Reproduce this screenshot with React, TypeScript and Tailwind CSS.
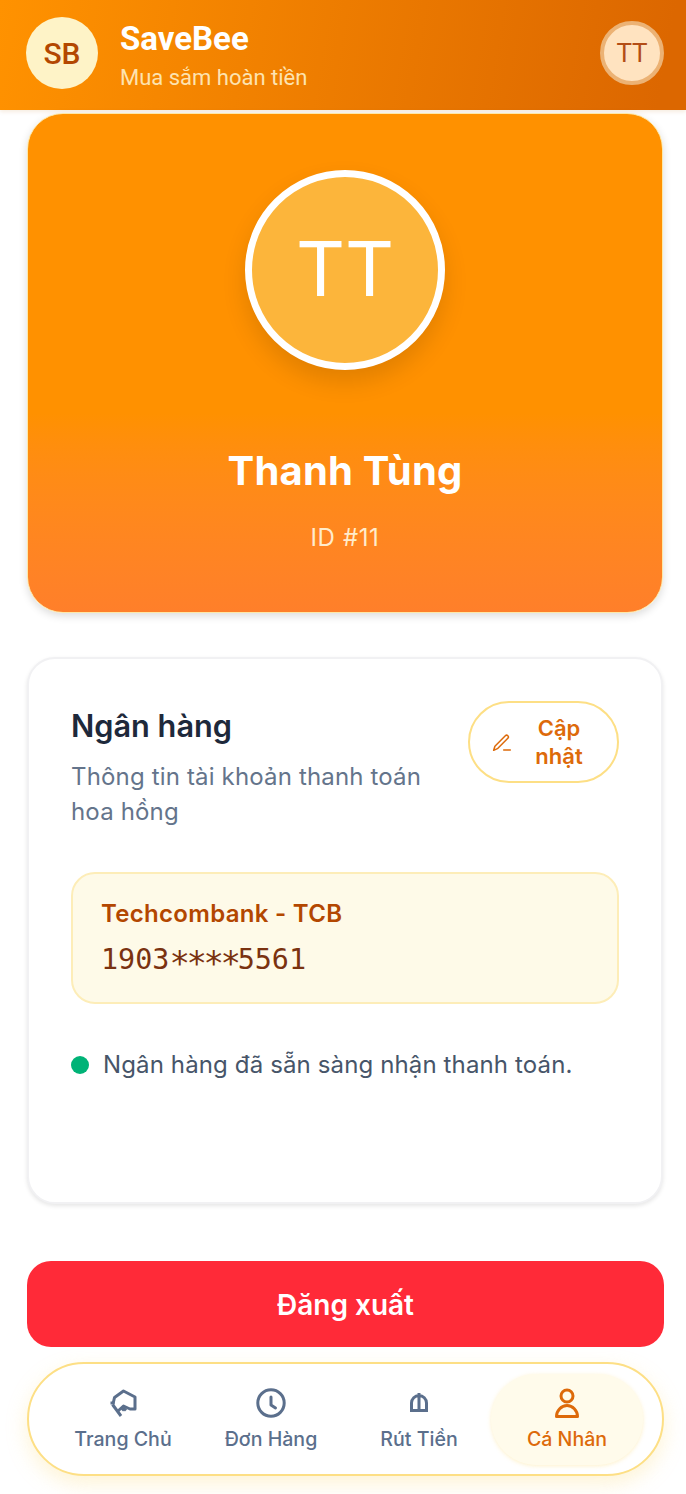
import React from "react";

const inter = "font-['Inter','Noto_Sans',sans-serif]";

function NavItem({ label, icon, active }: { label: string; icon: React.ReactNode; active?: boolean }) {
  return (
    <div
      className={
        "flex h-[91px] flex-col items-center justify-center rounded-[46px] pb-[2px] " +
        (active
          ? "-mx-[2px] w-[152px] bg-[#fffbeb] text-[#dd6a0a] shadow-[0_1px_4px_rgba(253,224,138,0.45)]"
          : "w-[148px] text-[#5b6f8c]")
      }
    >
      <div className="flex h-[36px] w-[36px] items-center justify-center">{icon}</div>
      <span className="mt-[5px] text-[19.6px] font-medium leading-[26px]">{label}</span>
    </div>
  );
}

export default function App() {
  return (
    <div className={"flex h-[1494px] w-[686px] flex-col overflow-hidden bg-white " + inter}>
      <header className="flex h-[110px] shrink-0 items-center justify-between bg-[linear-gradient(100deg,#ff9200_0%,#dc6700_96%)] pb-[4px] pl-[26px] pr-[22px] shadow-[0_2px_4px_rgba(180,100,0,0.12)]">
        <div className="flex items-center gap-[22px]">
          <div className="flex h-[72px] w-[72px] items-center justify-center rounded-full bg-[#fef3c7] font-['Roboto',sans-serif] text-[30px] font-medium text-[#b34700]">
            SB
          </div>
          <div className="flex flex-col pt-[6px] font-['Roboto',sans-serif]">
            <span className="text-[33px] font-bold leading-[40px] text-white">SaveBee</span>
            <span className="mt-[4px] text-[22px] leading-[30px] text-[#fde3b0]">Mua sắm hoàn tiền</span>
          </div>
        </div>
        <div className="flex h-[64px] w-[64px] items-center justify-center rounded-full border-[4px] border-[#ecb274] bg-[#ffe3c0] font-['Roboto',sans-serif] text-[26px] text-[#b34d16]">
          TT
        </div>
      </header>

      <main className="flex flex-col pl-[27px] pr-[22px]">
        <section className="mr-[1px] mt-[3px] flex h-[500px] flex-col items-center rounded-[36px] border border-[#fde8a8] bg-gradient-to-b from-[#ff9100] from-[60%] to-[#ff7f2a] shadow-[0_3px_8px_rgba(0,0,0,0.14)]">
          <div className="mt-[56px] flex h-[200px] w-[200px] items-center justify-center rounded-full border-[7px] border-white bg-[#fcb53b] pb-[4px] text-[76px] leading-none text-white shadow-[0_12px_24px_rgba(0,0,0,0.12)]">
            TT
          </div>
          <h1 className="mt-[75px] text-[40px] font-bold leading-[52px] tracking-[0.2px] text-white">Thanh Tùng</h1>
          <p className="mt-[25px] text-[24px] leading-[32px] tracking-[0.6px] text-[#ffeccc]">ID #11</p>
        </section>

        <section className="mr-[1px] mt-[44px] flex h-[547px] flex-col rounded-[28px] border-[2px] border-[#f1f1f3] bg-white px-[42px] pt-[43px] shadow-[0_2px_4px_rgba(0,0,0,0.1)]">
          <div className="flex items-start justify-between">
            <div className="w-[370px]">
              <h2 className="text-[30.7px] font-semibold leading-[48px] text-[#1e293b]">Ngân hàng</h2>
              <p className="mt-[9px] text-[24px] leading-[35px] tracking-[0.16px] text-[#64748b]">
                Thông tin tài khoản thanh toán hoa hồng
              </p>
            </div>
            <button className="-mt-[1px] flex h-[82px] w-[151px] items-center gap-[5px] rounded-[41px] border-[2px] border-[#fddf85] bg-white pl-[22px] text-[#dd6a0a]">
              <svg width="20" height="20" viewBox="0 0 24 24" fill="none" stroke="currentColor" strokeWidth="1.8" strokeLinecap="round" strokeLinejoin="round">
                <path d="M2 22l1.5-5L16 4.500a2.100 2.100 0 0 1 3 3L6.500 20 2 22z" />
                <path d="M14 21.500h8" />
              </svg>
              <span className="w-[84px] text-center text-[22px] font-semibold leading-[28px]">Cập nhật</span>
            </button>
          </div>

          <div className="mt-[43px] flex h-[132px] flex-col rounded-[24px] border-[2px] border-[#fdedb8] bg-[#fefae8] px-[28px] pt-[24px]">
            <span className="text-[24px] font-semibold leading-[32px] tracking-[0.3px] text-[#b34700]">Techcombank - TCB</span>
            <span className="mt-[10px] font-['DejaVu_Sans_Mono',monospace] text-[28.4px] leading-[36px] text-[#7a3210]">
              1903
              <span className="inline-block translate-y-[6px] text-[34px] leading-none tracking-[-3.4px]">****</span>
              5561
            </span>
          </div>

          <div className="mt-[44px] flex items-center gap-[14px]">
            <span className="h-[18px] w-[18px] rounded-full bg-[#00b377]" />
            <span className="text-[24px] leading-[34px] tracking-[0.13px] text-[#475569]">Ngân hàng đã sẵn sàng nhận thanh toán.</span>
          </div>
        </section>

        <button className="mt-[57px] flex h-[86px] items-center justify-center rounded-[24px] bg-[#ff2a38] pt-[2px] text-[28px] font-semibold text-white">
          Đăng xuất
        </button>

        <nav className="mt-[15px] flex h-[114px] items-center rounded-[57px] border-[2px] border-[#fddf85] bg-white pl-[20px] shadow-[0_8px_20px_rgba(253,224,138,0.35)]">
          <NavItem
            label="Trang Chủ"
            icon={
              <svg width="30" height="30" viewBox="0 0 30 30" fill="none" stroke="currentColor" strokeWidth="3" strokeLinejoin="round">
                <path d="M5 16L6.500 9.500 15.500 3 27 9v12h-5l-6.500-3-5.500 5" />
                <path d="M13 28L4.500 16.500" />
                <path d="M2.500 15h4M14 22.500l2-2 2 2" />
              </svg>
            }
          />
          <NavItem
            label="Đơn Hàng"
            icon={
              <svg width="30" height="30" viewBox="0 0 30 30" fill="none" stroke="currentColor" strokeWidth="3" strokeLinecap="round" strokeLinejoin="round">
                <circle cx="15" cy="15" r="13.200" />
                <path d="M15 9v8l4.500 3" />
              </svg>
            }
          />
          <NavItem
            label="Rút Tiền"
            icon={
              <svg width="18" height="19" viewBox="0 0 18 19" fill="none" stroke="currentColor" strokeWidth="3">
                <path d="M1.500 17.500V10a7.500 7.500 0 0 1 15 0v7.500zM9 0v17.500" />
              </svg>
            }
          />
          <NavItem
            active
            label="Cá Nhân"
            icon={
              <svg width="24" height="30" viewBox="0 0 24 30" fill="none" stroke="currentColor" strokeWidth="3" strokeLinejoin="round">
                <circle cx="12" cy="8" r="6" />
                <path d="M1.500 28.500c0-6 5-11 10.500-11s10.500 5 10.500 11z" />
              </svg>
            }
          />
        </nav>
      </main>
    </div>
  );
}
